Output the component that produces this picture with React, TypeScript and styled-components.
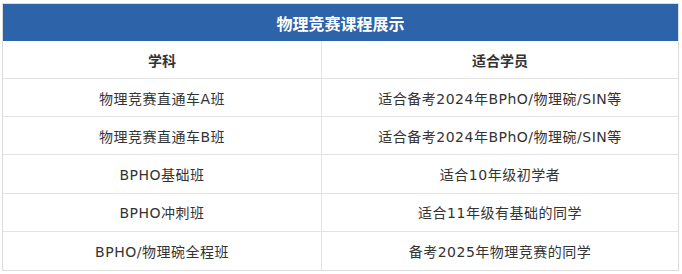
import React from "react";
import styled, { createGlobalStyle } from "styled-components";

const GlobalStyle = createGlobalStyle`
  body {
    margin: 0;
    background: #fff;
    font-family: "DejaVu Sans", "Noto Sans CJK SC", sans-serif;
  }
`;

const rows = [
  ["物理竞赛直通车A班", "适合备考2024年BPhO/物理碗/SIN等"],
  ["物理竞赛直通车B班", "适合备考2024年BPhO/物理碗/SIN等"],
  ["BPHO基础班", "适合10年级初学者"],
  ["BPHO冲刺班", "适合11年级有基础的同学"],
  ["BPHO/物理碗全程班", "备考2025年物理竞赛的同学"],
];

const App = () => {
  return (
    <Page>
      <GlobalStyle />
      <Table>
        <Title>物理竞赛课程展示</Title>
        <Row>
          <Cell $head>学科</Cell>
          <Cell $head>适合学员</Cell>
        </Row>
        {rows.map((r, i) => (
          <Row key={i} $last={i === rows.length - 1}>
            <Cell>{r[0]}</Cell>
            <Cell>{r[1]}</Cell>
          </Row>
        ))}
      </Table>
    </Page>
  );
};

export default App;

const Page = styled.div`
  padding: 3px 0 0 2px;
`;

const Table = styled.div`
  width: 677px;
  box-sizing: border-box;
  border: 1px solid #dcdcdc;
`;

const Title = styled.div`
  height: 37px;
  background-color: #2c63a9;
  color: #fff;
  font-size: 16px;
  font-weight: 700;
  display: flex;
  align-items: center;
  justify-content: center;
`;

const Row = styled.div<{ $last?: boolean }>`
  display: grid;
  grid-template-columns: 319px 1fr;
  height: 38.17px;
  box-sizing: border-box;
  border-bottom: ${(p) => (p.$last ? "none" : "1px solid #e3e3e3")};
`;

const Cell = styled.div<{ $head?: boolean }>`
  display: flex;
  align-items: center;
  justify-content: center;
  font-size: 14px;
  letter-spacing: ${(p) => (p.$head ? "0" : "0.5px")};
  color: #333;
  font-weight: ${(p) => (p.$head ? 700 : 400)};

  &:first-child {
    border-right: 1px solid #e3e3e3;
  }
`;
